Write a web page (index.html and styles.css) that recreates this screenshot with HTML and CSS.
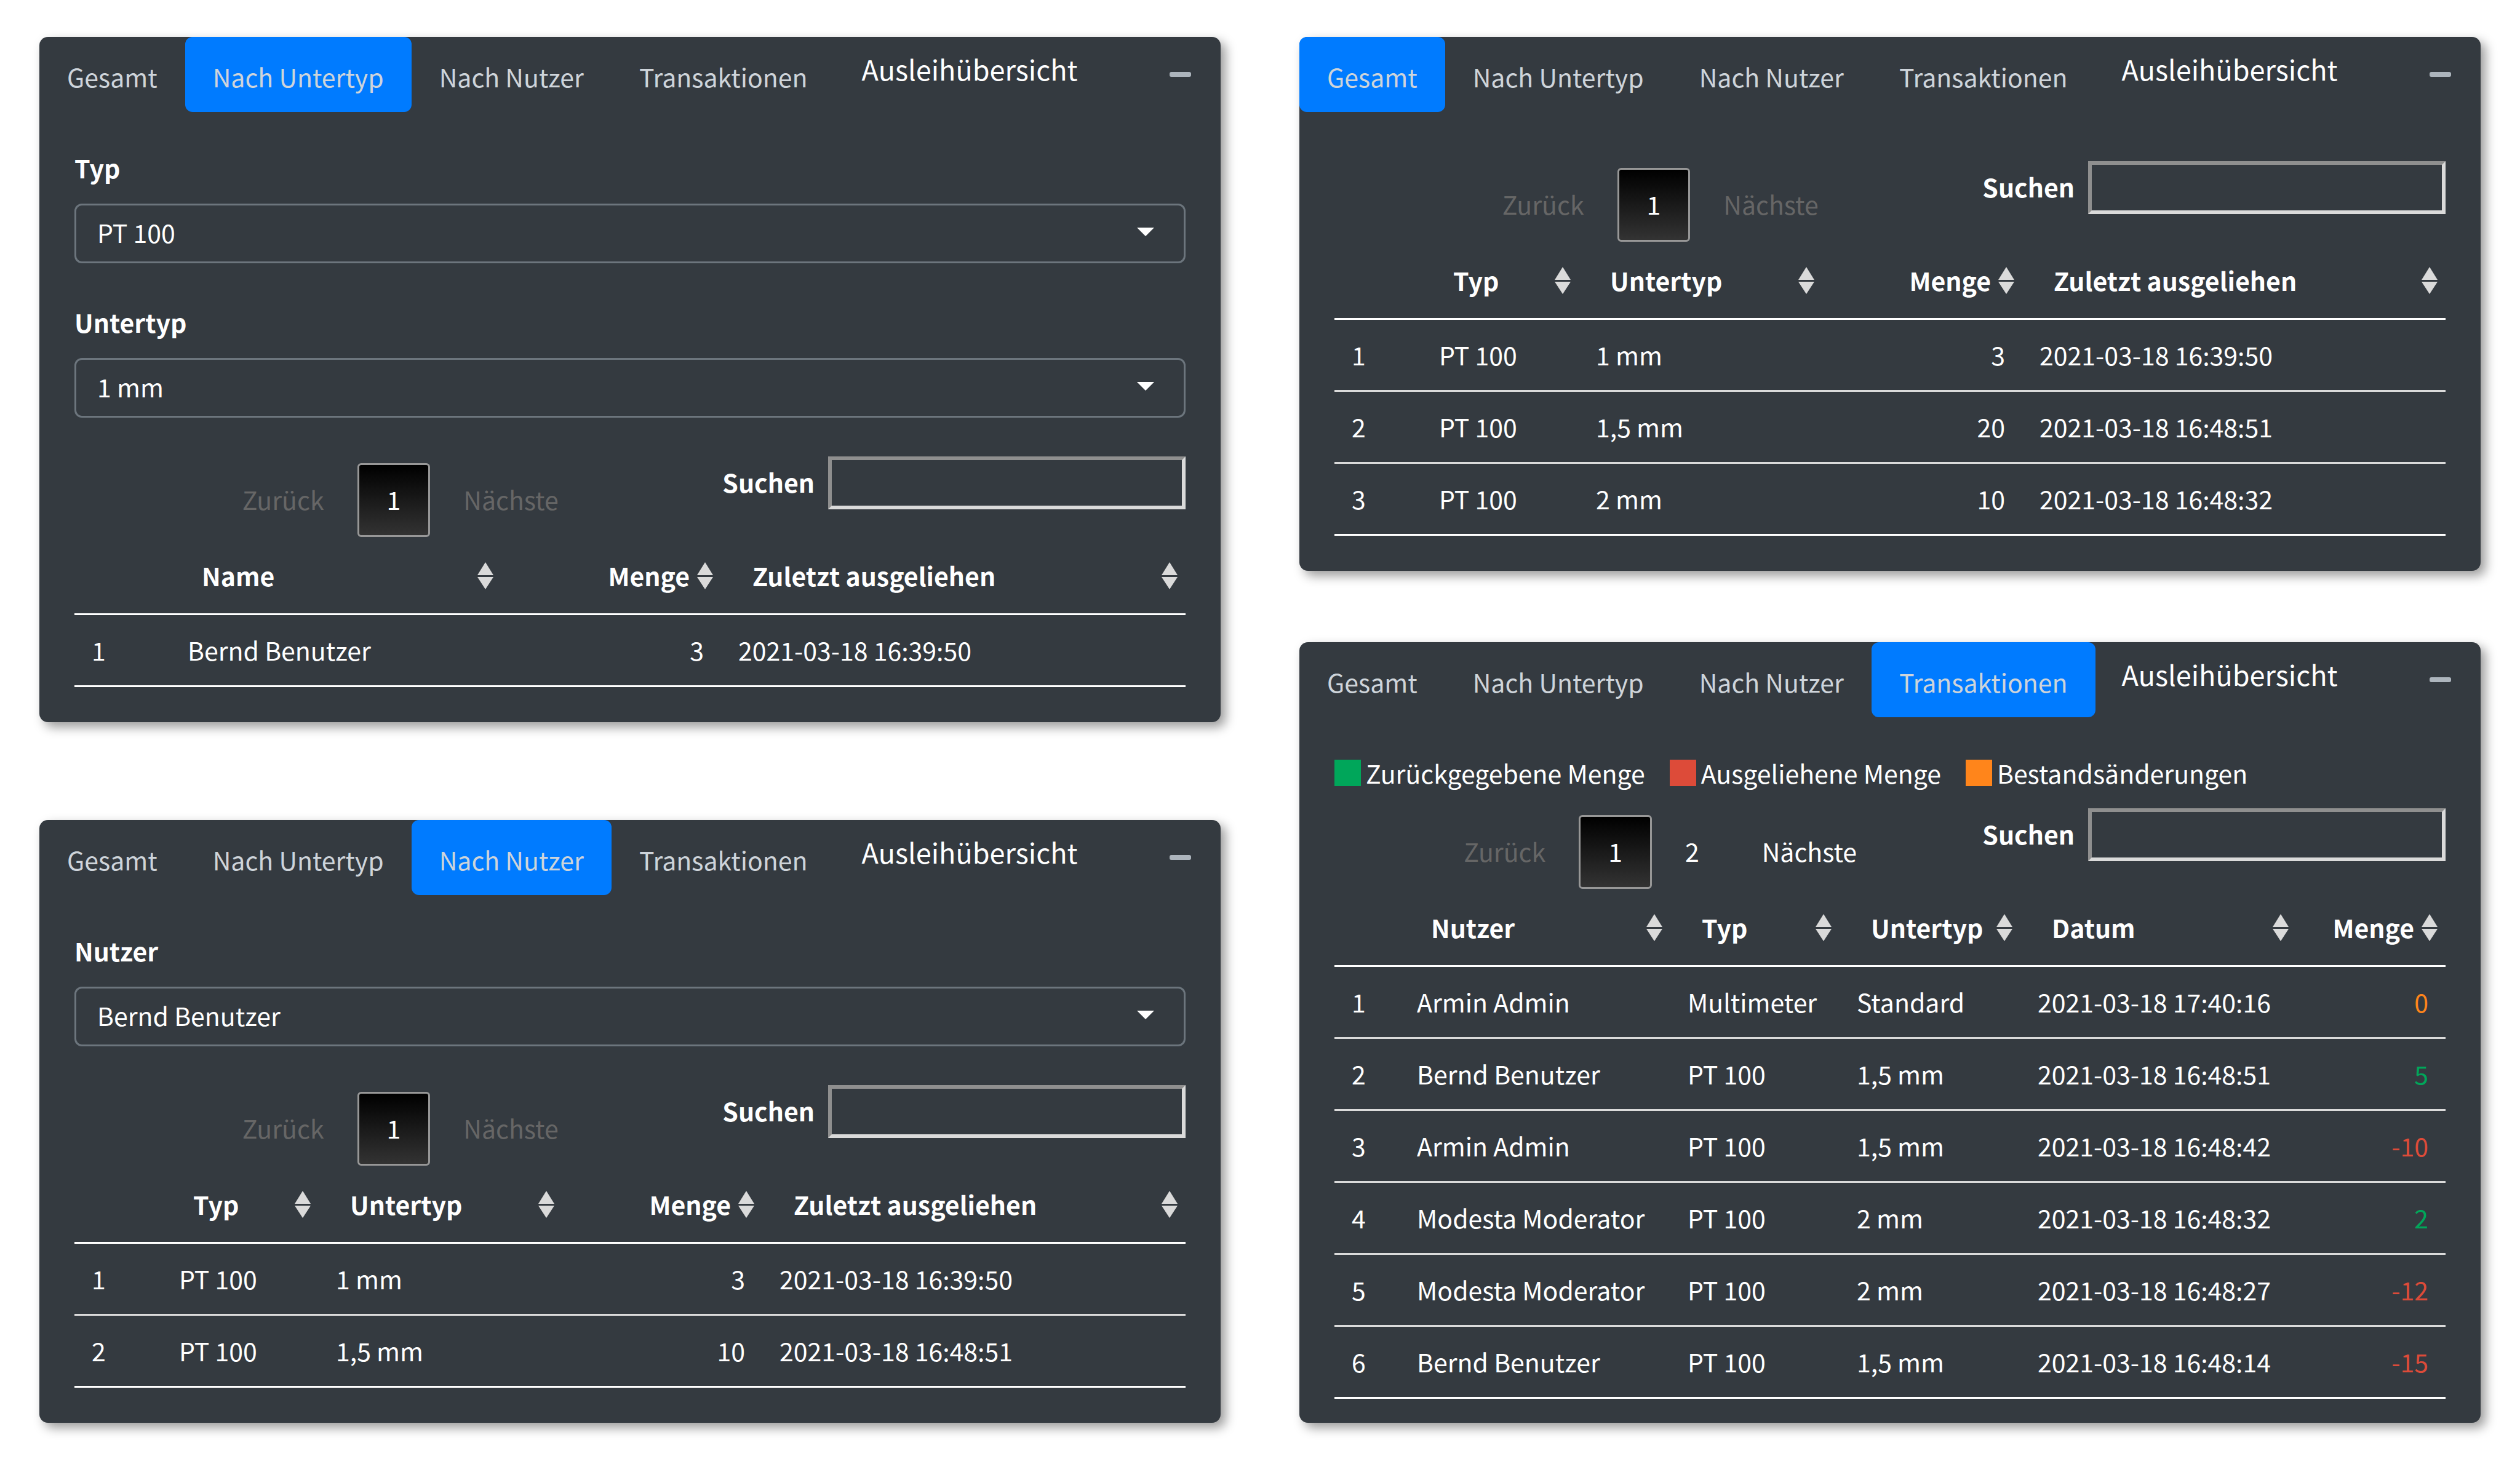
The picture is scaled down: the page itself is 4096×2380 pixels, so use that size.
FILE: index.html
```html
<!DOCTYPE html>
<html lang="de">
<head>
<meta charset="utf-8">
<title>Ausleihübersicht</title>
<link rel="stylesheet" href="styles.css">
</head>
<body>
<main class="dashboard">
  <div class="column column-left">

    <section class="card">
      <header class="card-header">
        <nav class="tabs">
          <a class="tab" href="#gesamt">Gesamt</a>
          <a class="tab active" href="#untertyp">Nach Untertyp</a>
          <a class="tab" href="#nutzer">Nach Nutzer</a>
          <a class="tab" href="#transaktionen">Transaktionen</a>
        </nav>
        <h3 class="card-title">Ausleihübersicht</h3>
        <button class="collapse" type="button" aria-label="Einklappen"><svg viewBox="0 0 35 8"><rect width="35" height="8" rx="3"/></svg></button>
      </header>
      <div class="card-body">
        <div class="fields">
          <div class="field">
            <label for="typ">Typ</label>
            <select id="typ"><option>PT 100</option></select>
          </div>
          <div class="field">
            <label for="untertyp-select">Untertyp</label>
            <select id="untertyp-select"><option>1 mm</option></select>
          </div>
        </div>
        <div class="controls">
          <div class="pager">
            <button type="button" disabled>Zurück</button>
            <button type="button" class="current">1</button>
            <button type="button" disabled>Nächste</button>
          </div>
          <div class="search">
            <label for="search-user">Suchen</label>
            <input id="search-user" type="search">
          </div>
        </div>
        <table class="table-user">
          <colgroup><col class="c-index"><col class="c-name"><col class="c-amount"><col></colgroup>
          <thead>
            <tr><th></th><th class="sort">Name</th><th class="sort num">Menge</th><th class="sort">Zuletzt ausgeliehen</th></tr>
          </thead>
          <tbody>
            <tr><td>1</td><td>Bernd Benutzer</td><td class="num">3</td><td>2021-03-18 16:39:50</td></tr>
          </tbody>
        </table>
      </div>
    </section>

    <section class="card">
      <header class="card-header">
        <nav class="tabs">
          <a class="tab" href="#gesamt">Gesamt</a>
          <a class="tab" href="#untertyp">Nach Untertyp</a>
          <a class="tab active" href="#nutzer">Nach Nutzer</a>
          <a class="tab" href="#transaktionen">Transaktionen</a>
        </nav>
        <h3 class="card-title">Ausleihübersicht</h3>
        <button class="collapse" type="button" aria-label="Einklappen"><svg viewBox="0 0 35 8"><rect width="35" height="8" rx="3"/></svg></button>
      </header>
      <div class="card-body">
        <div class="fields">
          <div class="field">
            <label for="nutzer-select">Nutzer</label>
            <select id="nutzer-select"><option>Bernd Benutzer</option></select>
          </div>
        </div>
        <div class="controls">
          <div class="pager">
            <button type="button" disabled>Zurück</button>
            <button type="button" class="current">1</button>
            <button type="button" disabled>Nächste</button>
          </div>
          <div class="search">
            <label for="search-items">Suchen</label>
            <input id="search-items" type="search">
          </div>
        </div>
        <table class="table-stock">
          <colgroup><col class="c-index"><col class="c-type"><col class="c-subtype"><col class="c-amount"><col></colgroup>
          <thead>
            <tr><th></th><th class="sort">Typ</th><th class="sort">Untertyp</th><th class="sort num">Menge</th><th class="sort">Zuletzt ausgeliehen</th></tr>
          </thead>
          <tbody>
            <tr><td>1</td><td>PT 100</td><td>1 mm</td><td class="num">3</td><td>2021-03-18 16:39:50</td></tr>
            <tr><td>2</td><td>PT 100</td><td>1,5 mm</td><td class="num">10</td><td>2021-03-18 16:48:51</td></tr>
          </tbody>
        </table>
      </div>
    </section>

  </div>
  <div class="column column-right">

    <section class="card">
      <header class="card-header">
        <nav class="tabs">
          <a class="tab active" href="#gesamt">Gesamt</a>
          <a class="tab" href="#untertyp">Nach Untertyp</a>
          <a class="tab" href="#nutzer">Nach Nutzer</a>
          <a class="tab" href="#transaktionen">Transaktionen</a>
        </nav>
        <h3 class="card-title">Ausleihübersicht</h3>
        <button class="collapse" type="button" aria-label="Einklappen"><svg viewBox="0 0 35 8"><rect width="35" height="8" rx="3"/></svg></button>
      </header>
      <div class="card-body">
        <div class="controls">
          <div class="pager">
            <button type="button" disabled>Zurück</button>
            <button type="button" class="current">1</button>
            <button type="button" disabled>Nächste</button>
          </div>
          <div class="search">
            <label for="search-total">Suchen</label>
            <input id="search-total" type="search">
          </div>
        </div>
        <table class="table-stock">
          <colgroup><col class="c-index"><col class="c-type"><col class="c-subtype"><col class="c-amount"><col></colgroup>
          <thead>
            <tr><th></th><th class="sort">Typ</th><th class="sort">Untertyp</th><th class="sort num">Menge</th><th class="sort">Zuletzt ausgeliehen</th></tr>
          </thead>
          <tbody>
            <tr><td>1</td><td>PT 100</td><td>1 mm</td><td class="num">3</td><td>2021-03-18 16:39:50</td></tr>
            <tr><td>2</td><td>PT 100</td><td>1,5 mm</td><td class="num">20</td><td>2021-03-18 16:48:51</td></tr>
            <tr><td>3</td><td>PT 100</td><td>2 mm</td><td class="num">10</td><td>2021-03-18 16:48:32</td></tr>
          </tbody>
        </table>
      </div>
    </section>

    <section class="card">
      <header class="card-header">
        <nav class="tabs">
          <a class="tab" href="#gesamt">Gesamt</a>
          <a class="tab" href="#untertyp">Nach Untertyp</a>
          <a class="tab" href="#nutzer">Nach Nutzer</a>
          <a class="tab active" href="#transaktionen">Transaktionen</a>
        </nav>
        <h3 class="card-title">Ausleihübersicht</h3>
        <button class="collapse" type="button" aria-label="Einklappen"><svg viewBox="0 0 35 8"><rect width="35" height="8" rx="3"/></svg></button>
      </header>
      <div class="card-body card-body-short">
        <ul class="legend">
          <li><span class="swatch returned"></span>Zurückgegebene Menge</li>
          <li><span class="swatch borrowed"></span>Ausgeliehene Menge</li>
          <li><span class="swatch changed"></span>Bestandsänderungen</li>
        </ul>
        <div class="controls">
          <div class="pager">
            <button type="button" disabled>Zurück</button>
            <button type="button" class="current">1</button>
            <button type="button">2</button>
            <button type="button">Nächste</button>
          </div>
          <div class="search">
            <label for="search-log">Suchen</label>
            <input id="search-log" type="search">
          </div>
        </div>
        <table class="table-log">
          <colgroup><col class="c-index"><col class="c-name"><col class="c-type"><col class="c-subtype"><col class="c-date"><col></colgroup>
          <thead>
            <tr><th></th><th class="sort">Nutzer</th><th class="sort">Typ</th><th class="sort">Untertyp</th><th class="sort">Datum</th><th class="sort num">Menge</th></tr>
          </thead>
          <tbody>
            <tr><td>1</td><td>Armin Admin</td><td>Multimeter</td><td>Standard</td><td>2021-03-18 17:40:16</td><td class="num is-changed">0</td></tr>
            <tr><td>2</td><td>Bernd Benutzer</td><td>PT 100</td><td>1,5 mm</td><td>2021-03-18 16:48:51</td><td class="num is-returned">5</td></tr>
            <tr><td>3</td><td>Armin Admin</td><td>PT 100</td><td>1,5 mm</td><td>2021-03-18 16:48:42</td><td class="num is-borrowed">-10</td></tr>
            <tr><td>4</td><td>Modesta Moderator</td><td>PT 100</td><td>2 mm</td><td>2021-03-18 16:48:32</td><td class="num is-returned">2</td></tr>
            <tr><td>5</td><td>Modesta Moderator</td><td>PT 100</td><td>2 mm</td><td>2021-03-18 16:48:27</td><td class="num is-borrowed">-12</td></tr>
            <tr><td>6</td><td>Bernd Benutzer</td><td>PT 100</td><td>1,5 mm</td><td>2021-03-18 16:48:14</td><td class="num is-borrowed">-15</td></tr>
          </tbody>
        </table>
      </div>
    </section>

  </div>
</main>
</body>
</html>
```
FILE: styles.css
```css
* {
  box-sizing: border-box;
}

body {
  margin: 0;
  background: #fff;
  color: #fff;
  font-family: "Noto Sans CJK SC", "Noto Sans", sans-serif;
  font-size: 41px;
  line-height: 68px;
}

button,
input,
select {
  font: inherit;
  color: inherit;
}

.dashboard {
  display: grid;
  grid-template-columns: 1fr 1fr;
  gap: 128px;
  padding: 60px 64px;
  align-items: start;
  min-height: 100vh;
}

.column {
  display: flex;
  flex-direction: column;
}

.column-left {
  gap: 159px;
}

.column-right {
  gap: 116px;
}

.card {
  background: #343a40;
  border-radius: 14px;
  box-shadow: 8px 8px 18px rgba(0, 0, 0, 0.4);
}

/* Header with tabs */

.card-header {
  display: flex;
  align-items: flex-start;
}

.tabs {
  display: flex;
}

.tab {
  padding: 30px 45px 24px;
  border-radius: 12px;
  color: #ced4da;
  text-decoration: none;
  white-space: nowrap;
}

.tab.active {
  background: #007bff;
}

.card-title {
  flex: 1;
  margin: 0;
  padding: 18px 0 0 43px;
  font-size: 45px;
  font-weight: 400;
}

.collapse {
  display: flex;
  margin: 35px 25px 0 0;
  padding: 22px 23px;
  border: 0;
  background: none;
}

.collapse svg {
  width: 35px;
  height: 8px;
  fill: #adb5bd;
}

.card-body {
  padding: 56px 57px 57px;
}

.card-body-short {
  padding-bottom: 39px;
}

/* Form fields */

.fields {
  display: flex;
  flex-direction: column;
  gap: 61px;
  margin-bottom: 39px;
}

.field {
  display: flex;
  flex-direction: column;
  gap: 25px;
}

.field label,
.search label {
  font-weight: 700;
}

.field select {
  appearance: none;
  height: 97px;
  padding: 0 34px 6px;
  border: 3px solid #6c757d;
  border-radius: 12px;
  background: url("data:image/svg+xml,%3Csvg xmlns='http://www.w3.org/2000/svg' viewBox='0 0 28 14'%3E%3Cpath d='M0 0h28L14 14z' fill='%23fff'/%3E%3C/svg%3E") no-repeat right 48px top 36px / 28px 14px;
}

/* Pager and search */

.controls {
  display: flex;
  align-items: flex-start;
  padding-top: 24px;
}

.pager {
  flex: 1;
  display: flex;
  justify-content: center;
  padding-top: 11px;
}

.pager button {
  height: 120px;
  margin-left: 6px;
  padding: 0 45px 4px;
  border: 3px solid transparent;
  border-radius: 6px;
  background: none;
}

.pager button:disabled {
  color: #666;
}

.pager .current {
  border-color: #979797;
  background: linear-gradient(#000, #333) padding-box;
}

.search {
  display: flex;
  gap: 22px;
}

.search label {
  padding-top: 7px;
}

.search input {
  width: 581px;
  height: 86px;
  border: 6px solid;
  border-color: #8f8f8f #dadada #dadada #8f8f8f;
  background: none;
}

/* Tables */

table {
  width: 100%;
  table-layout: fixed;
  border-collapse: separate;
  border-spacing: 0;
}

th {
  padding: 28px 51px;
  border-bottom: 3px solid #fff;
  font-weight: 700;
  text-align: left;
  white-space: nowrap;
}

td {
  padding: 22px 28px 24px;
  border-bottom: 3px solid #dadada;
  white-space: nowrap;
}

tbody tr:last-child td {
  border-bottom-color: #fff;
}

.num {
  text-align: right;
}

.sort {
  background: url("data:image/svg+xml,%3Csvg xmlns='http://www.w3.org/2000/svg' viewBox='0 0 26 44'%3E%3Cpath d='M13 0l13 21H0zM0 24h26L13 44z' fill='%23dadada'/%3E%3C/svg%3E") no-repeat right 13px top 41px / 26px 44px;
}

.table-user .c-index { width: 156px; }
.table-user .c-name { width: 538px; }
.table-user .c-amount { width: 357px; }

.table-stock .c-index { width: 142px; }
.table-stock .c-type { width: 255px; }
.table-stock .c-subtype { width: 396px; }
.table-stock .c-amount { width: 325px; }

.table-log .c-index { width: 106px; }
.table-log .c-name { width: 440px; }
.table-log .c-type { width: 275px; }
.table-log .c-subtype { width: 294px; }
.table-log .c-date { width: 449px; }

.is-returned { color: #00a65a; }
.is-borrowed { color: #dd4b39; }
.is-changed { color: #ff851b; }

/* Legend */

.legend {
  display: flex;
  gap: 40px;
  margin: 0;
  padding: 0;
  list-style: none;
}

.legend li {
  display: flex;
  align-items: center;
  gap: 8px;
}

.swatch {
  width: 43px;
  height: 43px;
}

.returned { background: #00a65a; }
.borrowed { background: #dd4b39; }
.changed { background: #ff851b; }
```
